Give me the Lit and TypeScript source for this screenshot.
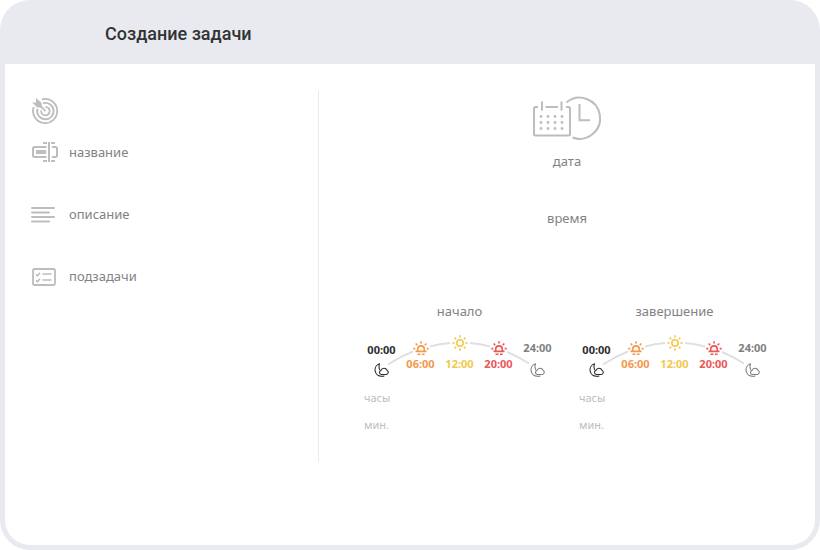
import { LitElement, html, svg, css } from "lit";
import { customElement, property } from "lit/decorators.js";

type Mark = { time: string; kind: "midnight" | "sunrise" | "noon" | "sunset" | "night" };

const MARKS: Mark[] = [
  { time: "00:00", kind: "midnight" },
  { time: "06:00", kind: "sunrise" },
  { time: "12:00", kind: "noon" },
  { time: "20:00", kind: "sunset" },
  { time: "24:00", kind: "night" },
];

const moon = html`<svg class="glyph" width="16" height="14" viewBox="0 0 16 14" aria-hidden="true">
  <path d="M5.500 .8A6.400 6.400 0 0 0 7.500 13.300C8.500 13.500 9.200 13.300 10 13M5.500 .8A8 8 0 0 0 5.600 6.500" />
  <path d="M7.300 11.500A2.100 2.100 0 0 1 7 7.400A3.200 3.200 0 0 1 13 7.200A2.300 2.300 0 0 1 12.500 11.500z" />
</svg>`;

const lowSun = html`<svg class="glyph" width="16" height="14" viewBox="0 0 16 14" aria-hidden="true">
  <path class="thick" d="M2.500 10.400h11M4.700 10V8.200a3.300 3.300 0 0 1 6.600 0V10M4.500 13.200h3M9 13.200h2.600M8 .2v2.300M2.700 2.500l1.500 1.600M13.300 2.500l-1.500 1.600M.3 7.600h2M13.700 7.600h2" />
</svg>`;

const highSun = html`<svg class="glyph" width="16" height="16" viewBox="0 0 16 16" aria-hidden="true">
  <circle class="thick" cx="8" cy="8" r="3.200" />
  <path class="thick" d="M8 .2v2.400M8 13.400v2.400M.2 8h2.400M13.400 8h2.400M2.600 2.600l1.500 1.500M11.900 11.900l1.500 1.500M13.400 2.600l-1.500 1.500M4.100 11.900l-1.500 1.500" />
</svg>`;

@customElement("day-arc")
class DayArc extends LitElement {
  @property() heading = "";

  static styles = css`
    :host {
      display: block;
      width: 195px;
      padding: 0 10px;
    }
    .heading {
      margin: 0 0 14px;
      font: 400 13px/20px "Noto Sans", sans-serif;
      color: #828282;
      text-align: center;
    }
    .chart {
      position: relative;
      display: grid;
      grid-template-columns: repeat(5, 1fr);
      height: 42px;
    }
    .arc {
      position: absolute;
      inset: 0;
      fill: none;
      stroke: #e0e0e0;
      stroke-width: 2;
    }
    .mark {
      position: relative;
      display: flex;
      flex-direction: column;
      align-items: center;
      justify-content: flex-end;
      gap: 2px;
      margin: 0;
      padding: 0 0 6px;
      border: 0;
      background: none;
      font: 700 11px/14px "Noto Sans", sans-serif;
      cursor: pointer;
    }
    .glyph {
      flex: none;
      fill: none;
      stroke: currentColor;
      stroke-width: 1.100;
      stroke-linecap: round;
      stroke-linejoin: round;
    }
    .thick {
      stroke-width: 1.600;
      stroke-linecap: butt;
    }
    .midnight {
      flex-direction: column-reverse;
      justify-content: flex-start;
      gap: 6px;
      padding: 0;
      color: #2d2d2d;
    }
    .night {
      flex-direction: column-reverse;
      justify-content: flex-start;
      gap: 8px;
      padding: 0;
      color: #7f7f7f;
    }
    .sunrise {
      color: #f2994a;
    }
    .noon {
      gap: 6px;
      color: #f2c94c;
    }
    .sunset {
      color: #eb5757;
    }
    .units {
      display: grid;
      gap: 11px;
      margin: 13px 0 0 2px;
      font: 400 11px/16px "Noto Sans", sans-serif;
      color: #bdbdbd;
    }
  `;

  private glyph(kind: Mark["kind"]) {
    if (kind === "noon") return highSun;
    return kind === "sunrise" || kind === "sunset" ? lowSun : moon;
  }

  render() {
    return html`
      <h3 class="heading">${this.heading}</h3>
      <div class="chart">
        <svg class="arc" width="195" height="42" viewBox="0 0 195 42" aria-hidden="true">
          <path d="M26 29.500A129 129 0 0 1 51 16.500M68 11.500A129 129 0 0 1 88 8M108 8A129 129 0 0 1 128 11.500M145 17A129 129 0 0 1 167 28.500" />
        </svg>
        ${MARKS.map(
          (m) => html`<button class="mark ${m.kind}" type="button">${this.glyph(m.kind)}<span>${m.time}</span></button>`
        )}
      </div>
      <div class="units"><span>часы</span><span>мин.</span></div>
    `;
  }
}

const target = svg`
  <g fill="none" stroke-width="1.800">
    <path d="M10 2.300A12.100 12.100 0 1 1 1.700 10" />
    <path d="M11 6.200A8.200 8.200 0 1 1 5.500 11.800" />
    <path d="M13.500 9.800A4.300 4.300 0 1 1 9.100 13.500M13.500 14.200L7 7.500" />
  </g>
  <path stroke="none" d="M0 5.200L4 5.800 4 1 9.500 5.800 10 10.800 5 10.200z" />`;

const rename = svg`
  <path fill="none" stroke-width="2" d="M14.500 5H2.500A1.500 1.500 0 0 0 1 6.500v7A1.500 1.500 0 0 0 2.500 15H14.500M20 5h3.500A1.500 1.500 0 0 1 25 6.500v7a1.500 1.500 0 0 1-1.500 1.500H20M17 0v20M11 1h4M19 1h4M11 19h4M19 19h4" />
  <path stroke="none" d="M4 8h10v4H4z" />`;

const lines = svg`<path fill="none" stroke-width="2" stroke-linecap="round" d="M0 4h22M0 8.500h17M0 13h22M0 17.500h17" />`;

const checklist = svg`
  <g fill="none">
    <rect x="1" y="3" width="22" height="16" rx="1.500" stroke-width="1.800" />
    <path stroke-width="1.500" d="M4 8.300l1.500 1.500 2.500-3M4 14.300l1.500 1.500 2.500-3M10.500 8h9M10.500 14h9" />
  </g>`;

@customElement("app-root")
class AppRoot extends LitElement {
  static styles = css`
    :host {
      display: block;
    }
    .shell {
      box-sizing: border-box;
      display: flex;
      flex-direction: column;
      min-height: 100vh;
      padding: 0 5px 5px;
      border-radius: 30px;
      background: #e9eaef;
    }
    .title {
      margin: 0;
      padding: 22px 100px 18px;
      font: 500 18px/24px Roboto, sans-serif;
      color: #333;
    }
    .body {
      flex: 1;
      display: grid;
      grid-template-columns: 313px 1fr;
      align-items: start;
      padding-top: 27px;
      border-radius: 0 0 25px 25px;
      background: #fff;
    }
    .fields {
      display: grid;
      gap: 42px;
      padding: 6px 27px 0;
    }
    .goal {
      display: block;
      margin-bottom: -24px;
    }
    .field {
      display: flex;
      align-items: center;
      gap: 11px;
      height: 20px;
    }
    .icon {
      flex: none;
      overflow: visible;
      fill: #bdbdbd;
      stroke: #bdbdbd;
    }
    .label {
      margin: 0;
      font: 400 13px/20px "Noto Sans", sans-serif;
      color: #828282;
    }
    .schedule {
      display: flex;
      flex-direction: column;
      align-items: center;
      padding: 5px 0 29px;
      border-left: 1px solid #e9eaef;
    }
    .date {
      margin-top: 10px;
    }
    .time {
      margin-top: 37px;
    }
    .arcs {
      display: flex;
      flex-wrap: wrap;
      justify-content: center;
      margin-top: 73px;
    }
  `;

  render() {
    return html`
      <main class="shell">
        <h1 class="title">Создание задачи</h1>
        <div class="body">
          <section class="fields">
            <svg class="icon goal" width="27" height="27" viewBox="0 0 27 27" aria-hidden="true">${target}</svg>
            ${[
              { icon: rename, text: "название" },
              { icon: lines, text: "описание" },
              { icon: checklist, text: "подзадачи" },
            ].map(
              (f) => html`<div class="field">
                <svg class="icon" width="26" height="20" viewBox="0 0 26 20" aria-hidden="true">${f.icon}</svg>
                <h2 class="label">${f.text}</h2>
              </div>`
            )}
          </section>
          <section class="schedule">
            <svg class="icon" width="70" height="45" viewBox="0 0 70 45" aria-hidden="true">
              <g fill="none" stroke-width="2">
                <path d="M6 11H3.500A1.500 1.500 0 0 0 2 12.500V38a1.500 1.500 0 0 0 1.500 1.500h33A1.500 1.500 0 0 0 38 38V12.500A1.500 1.500 0 0 0 36.500 11H34M13.500 11H26M10 5.500v9M29.500 5.500v9" />
                <path d="M34.500 6.500A20.500 20.500 0 1 1 40.500 41.500M47.500 8v16.300H58" />
              </g>
              <g stroke="none">
                ${[20.5, 26.5, 32.5].map((y) => [9, 16, 23, 30].map((x) => svg`<circle cx=${x} cy=${y} r="1.400" />`))}
              </g>
            </svg>
            <h2 class="label date">дата</h2>
            <h2 class="label time">время</h2>
            <div class="arcs">
              <day-arc heading="начало"></day-arc>
              <day-arc heading="завершение"></day-arc>
            </div>
          </section>
        </div>
      </main>
    `;
  }
}
